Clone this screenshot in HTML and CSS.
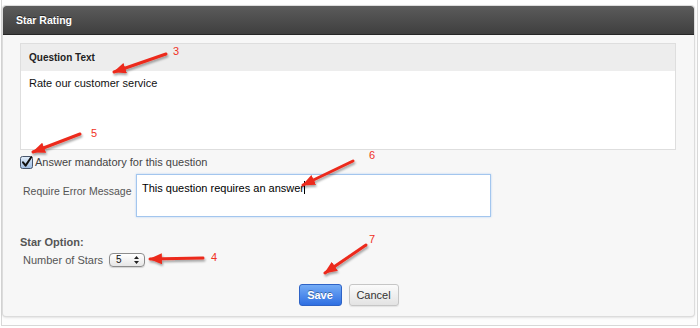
FILE: index.html
```html
<!DOCTYPE html>
<html>
<head>
<meta charset="utf-8">
<link rel="stylesheet" href="styles.css">
</head>
<body>
<div class="frame">
  <div class="dialog">
    <div class="dlg-head">Star Rating</div>
    <div class="dlg-body">
      <div class="qbox">
        <div class="qbox-head">Question Text</div>
        <div class="qbox-body">Rate our customer service</div>
      </div>
      <div class="check-row">
        <svg class="checkbox" width="13" height="13" viewBox="0 0 13 13">
          <defs>
            <linearGradient id="cbg" x1="0" y1="0" x2="0" y2="1">
              <stop offset="0" stop-color="#e2edf9"/>
              <stop offset="1" stop-color="#9fbde3"/>
            </linearGradient>
          </defs>
          <rect x="0.5" y="0.5" width="12" height="12" rx="2" fill="url(#cbg)" stroke="#47556b"/>
          <path d="M3 6.3 L5.6 9.6 L11.2 1.2" fill="none" stroke="#111" stroke-width="2" stroke-linecap="round" stroke-linejoin="round"/>
        </svg>
        <span class="check-label">Answer mandatory for this question</span>
      </div>
      <div class="error-row">
        <span class="error-label">Require Error Message</span>
        <div class="error-input">This question requires an answer<span class="caret"></span></div>
      </div>
      <div class="section-title">Star Option:</div>
      <div class="stars-row">
        <span class="stars-label">Number of Stars</span>
        <div class="select">
          <span class="select-value">5</span>
          <svg class="select-arrows" width="5" height="8" viewBox="0 0 5 8">
            <path d="M0 3 L2.5 0 L5 3 Z M0 5 L2.5 8 L5 5 Z" fill="#222"/>
          </svg>
        </div>
      </div>
      <div class="buttons">
        <div class="btn btn-save">Save</div>
        <div class="btn btn-cancel">Cancel</div>
      </div>
    </div>
  </div>
</div>
<svg class="annotations" width="700" height="328" viewBox="0 0 700 328">
  <defs>
    <marker id="ah" viewBox="0 0 12 10" refX="11" refY="5" markerWidth="13" markerHeight="11" markerUnits="userSpaceOnUse" orient="auto">
      <path d="M0 0 L12 5 L0 10 Z" fill="#ec2a1c"/>
    </marker>
    <filter id="sh" x="-20%" y="-50%" width="140%" height="200%">
      <feDropShadow dx="1" dy="2" stdDeviation="1.2" flood-color="#000" flood-opacity="0.35"/>
    </filter>
  </defs>
  <g class="arrows" filter="url(#sh)">
    <line x1="166" y1="54" x2="114" y2="72" marker-end="url(#ah)"/>
    <line x1="80" y1="134" x2="33" y2="152" marker-end="url(#ah)"/>
    <line x1="353" y1="161" x2="303" y2="185" marker-end="url(#ah)"/>
    <line x1="203" y1="258" x2="150" y2="259" marker-end="url(#ah)"/>
    <line x1="366" y1="245" x2="325" y2="273" marker-end="url(#ah)"/>
  </g>
  <g class="nums">
    <text x="176" y="55">3</text>
    <text x="94" y="137">5</text>
    <text x="372" y="159">6</text>
    <text x="214" y="261">4</text>
    <text x="372" y="243">7</text>
  </g>
</svg>
</body>
</html>
```
FILE: styles.css
```css
html, body {
  margin: 0;
  padding: 0;
  background: #ffffff;
  font-family: "Liberation Sans", Arial, sans-serif;
  width: 700px;
  height: 328px;
  overflow: hidden;
  position: relative;
}

.frame {
  margin-left: 1px;
  width: 697px;
  height: 326px;
  box-sizing: border-box;
  border: 1px solid #d8d8d8;
  border-top: none;
  padding: 6px 0 0 1px;
  background: #fdfdfd;
}

.dialog {
  width: 691px;
  height: 310px;
  box-sizing: border-box;
  background: #f7f7f7;
  border-radius: 3px;
  box-shadow: 0 0 0 1px #dcdcdc, 0 1px 3px rgba(0, 0, 0, 0.22);
  display: flex;
  flex-direction: column;
  overflow: hidden;
}

.dlg-head {
  height: 28px;
  line-height: 28px;
  border-bottom: 1px solid #262626;
  background: linear-gradient(#5b5b5b, #3f3f3f);
  color: #ffffff;
  font-size: 10.5px;
  font-weight: bold;
  padding-left: 13px;
  text-shadow: 0 -1px 0 rgba(0, 0, 0, 0.5);
  border-radius: 3px 3px 0 0;
}

.dlg-body {
  padding: 8px 18px 0 17px;
  display: flex;
  flex-direction: column;
}

.qbox {
  width: 656px;
  box-sizing: border-box;
  border: 1px solid #dedede;
  background: #ffffff;
}

.qbox-head {
  height: 27px;
  line-height: 27px;
  background: #ededed;
  padding-left: 8px;
  font-size: 10px;
  font-weight: bold;
  color: #222;
}

.qbox-body {
  height: 78px;
  box-sizing: border-box;
  padding: 5px 8px;
  font-size: 11px;
  line-height: 14px;
  color: #111;
}

.check-row {
  margin-top: 6px;
  height: 13px;
  display: flex;
  align-items: center;
}

.checkbox {
  display: block;
  flex: none;
}

.check-label {
  margin-left: 2px;
  font-size: 11px;
  line-height: 13px;
  color: #444;
}

.error-row {
  margin-top: 5px;
  display: flex;
  align-items: flex-start;
}

.error-label {
  width: 116px;
  box-sizing: border-box;
  padding-left: 3px;
  margin-top: 10px;
  font-size: 10.5px;
  line-height: 14px;
  color: #555;
}

.error-input {
  width: 355px;
  height: 43px;
  box-sizing: border-box;
  border: 1px solid #a3c6ee;
  box-shadow: 0 0 2px #b7d4f4;
  background: #ffffff;
  padding: 6px 5px;
  font-size: 11px;
  line-height: 14px;
  color: #000;
}

.caret {
  display: inline-block;
  width: 1px;
  height: 13px;
  background: #000;
  vertical-align: -2px;
}

.section-title {
  margin-top: 18px;
  font-size: 11px;
  line-height: 14px;
  font-weight: bold;
  color: #555;
}

.stars-row {
  margin-top: 4px;
  height: 14px;
  display: flex;
  align-items: center;
}

.stars-label {
  padding-left: 3px;
  font-size: 11px;
  line-height: 14px;
  color: #555;
}

.select {
  margin-left: 6px;
  width: 36px;
  height: 14px;
  box-sizing: border-box;
  border: 1px solid #8c8c8c;
  border-radius: 4px;
  background: linear-gradient(#ffffff, #e6e6e6);
  box-shadow: 0 1px 1px rgba(0, 0, 0, 0.15);
  display: flex;
  align-items: center;
  justify-content: space-between;
  padding: 0 5px 0 6px;
}

.select-value {
  font-size: 10px;
  line-height: 12px;
  color: #111;
}

.select-arrows {
  display: block;
}

.buttons {
  margin-top: 17px;
  display: flex;
  justify-content: center;
  gap: 7px;
  padding-left: 1px;
}

.btn {
  height: 22px;
  box-sizing: border-box;
  border-radius: 3px;
  font-size: 11px;
  line-height: 20px;
  text-align: center;
}

.btn-save {
  width: 43px;
  border: 1px solid #2e63c6;
  background: linear-gradient(#74acf6, #2f6fe2);
  color: #ffffff;
  font-weight: bold;
  text-shadow: 0 -1px 0 rgba(0, 0, 0, 0.35);
}

.btn-cancel {
  width: 50px;
  border: 1px solid #c6c6c6;
  background: linear-gradient(#fbfbfb, #e3e3e3);
  color: #333;
  box-shadow: 0 1px 1px rgba(0, 0, 0, 0.08);
}

.annotations {
  position: absolute;
  top: 0;
  left: 0;
  pointer-events: none;
}

.arrows line {
  stroke: #ec2a1c;
  stroke-width: 3;
  stroke-linecap: round;
}

.nums text {
  fill: #f0321f;
  font-family: "Liberation Sans", Arial, sans-serif;
  font-size: 11px;
  text-anchor: middle;
}
```
